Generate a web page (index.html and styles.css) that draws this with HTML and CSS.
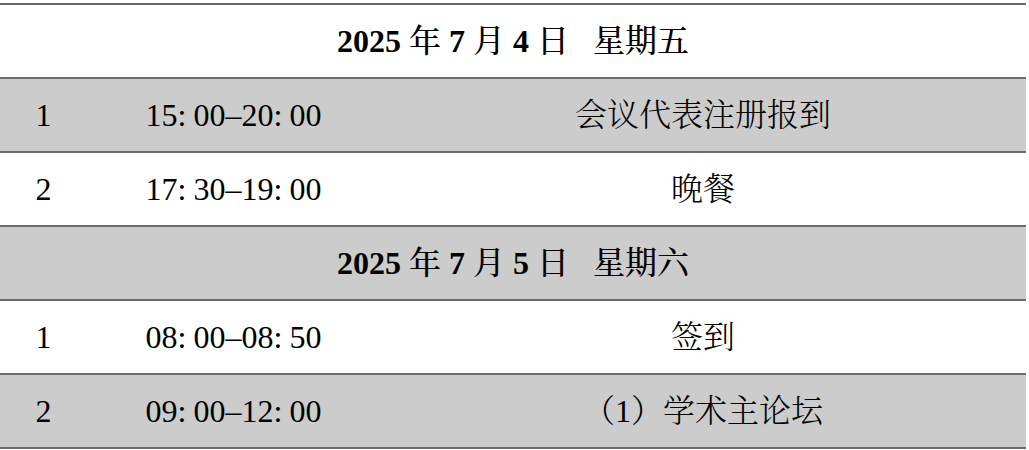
FILE: index.html
```html
<!DOCTYPE html>
<html lang="zh-CN">
<head>
<meta charset="utf-8">
<title>会议日程</title>
<link rel="stylesheet" href="styles.css">
</head>
<body>
<table class="schedule">
  <colgroup>
    <col class="c-no">
    <col class="c-time">
    <col class="c-item">
  </colgroup>
  <tbody>
    <tr class="day">
      <td colspan="3">2025 <span class="cj">年</span> 7 <span class="cj">月</span> 4 <span class="cj">日</span><span class="cj wk">星期五</span></td>
    </tr>
    <tr class="gray">
      <td>1</td>
      <td>15<span class="c">:</span>00–20<span class="c">:</span>00</td>
      <td class="cj">会议代表注册报到</td>
    </tr>
    <tr>
      <td>2</td>
      <td>17<span class="c">:</span>30–19<span class="c">:</span>00</td>
      <td class="cj">晚餐</td>
    </tr>
    <tr class="day gray">
      <td colspan="3">2025 <span class="cj">年</span> 7 <span class="cj">月</span> 5 <span class="cj">日</span><span class="cj wk">星期六</span></td>
    </tr>
    <tr>
      <td>1</td>
      <td>08<span class="c">:</span>00–08<span class="c">:</span>50</td>
      <td class="cj">签到</td>
    </tr>
    <tr class="gray">
      <td>2</td>
      <td>09<span class="c">:</span>00–12<span class="c">:</span>00</td>
      <td class="cj">（1）学术主论坛</td>
    </tr>
  </tbody>
</table>
</body>
</html>
```

FILE: styles.css
```css
html, body {
  margin: 0;
  background: #ffffff;
}

body {
  padding-top: 3px;
  font-family: "Liberation Serif", "Noto Serif CJK SC", "Noto Sans CJK SC", serif;
  font-size: 32px;
  color: #000000;
}

.schedule {
  width: 1026px;
  table-layout: fixed;
  border-collapse: separate;
  border-spacing: 0;
  border-top: 2px solid #6b6b6b;
}

.c-no { width: 87px; }
.c-time { width: 293px; }
.c-item { width: 646px; }

.schedule td {
  height: 72px;
  padding: 0;
  border-bottom: 2px solid #6b6b6b;
  text-align: center;
  vertical-align: middle;
  line-height: 1;
  white-space: nowrap;
}

.gray td {
  background: #cccccc;
}

.c {
  letter-spacing: 0.222em;
}

.cj {
  font-weight: 300;
}

.day td {
  font-weight: 700;
}

.day .cj {
  font-weight: 500;
}

.wk {
  margin-left: 24px;
}
```
